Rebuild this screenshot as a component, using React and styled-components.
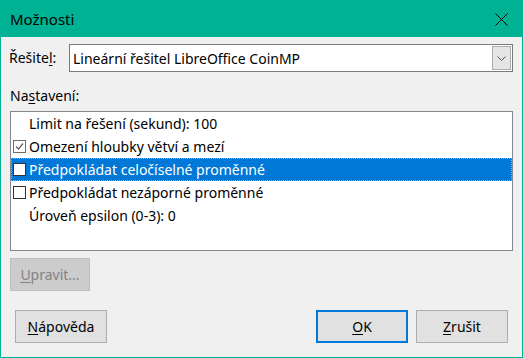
import React from "react";
import styled, { createGlobalStyle } from "styled-components";

const GlobalStyle = createGlobalStyle`
  html, body {
    margin: 0;
    padding: 0;
    background: #f0f0f0;
  }
  body {
    font-family: "Noto Sans", "Open Sans", sans-serif;
    font-size: 14px;
    color: #000;
  }
`;

const Window = styled.div`
  width: 523px;
  height: 358px;
  box-sizing: border-box;
  border: 1px solid #00b294;
  background: #f0f0f0;
  display: flex;
  flex-direction: column;
`;

const TitleBar = styled.div`
  height: 36px;
  background: #00b294;
  display: flex;
  align-items: center;
  justify-content: space-between;
  padding: 0 14px 0 9px;
  font-size: 15px;
`;

const Content = styled.div`
  flex: 1;
  display: flex;
  flex-direction: column;
  padding: 7px 9px 0 8px;
`;

const SolverRow = styled.div`
  display: flex;
  align-items: center;
`;

const Label = styled.span`
  line-height: 20px;
  white-space: nowrap;
`;

const SolverLabel = styled(Label)`
  width: 60px;
`;

const Key = styled.span`
  text-decoration: underline;
  text-underline-offset: 2px;
`;

const Combo = styled.div`
  flex: 1;
  height: 28px;
  box-sizing: border-box;
  border: 1px solid #7a7a7a;
  background: #fff;
  display: flex;
  align-items: stretch;
`;

const ComboText = styled.div`
  flex: 1;
  display: flex;
  align-items: center;
  padding-left: 3px;
`;

const ComboButton = styled.div`
  width: 19px;
  margin: 1px;
  box-sizing: border-box;
  border: 1px solid #adadad;
  background: #e5e5e5;
  display: flex;
  align-items: center;
  justify-content: center;
`;

const SectionLabel = styled(Label)`
  display: block;
  margin: 14px 0 5px 1px;
`;

const ListBox = styled.div`
  height: 140px;
  margin-left: 1px;
  box-sizing: border-box;
  border: 1px solid #828790;
  background: #fff;
`;

const Row = styled.div`
  height: 23px;
  box-sizing: border-box;
  display: flex;
  align-items: center;
  gap: 3px;
  padding-left: ${(p) => (p.$indent ? "17px" : "1px")};
  background: ${(p) => (p.$selected ? "#0078d7" : "transparent")};
  color: ${(p) => (p.$selected ? "#fff" : "#000")};
  border: 1px dotted ${(p) => (p.$selected ? "#f39a2b" : "transparent")};
  white-space: nowrap;
`;

const Box = styled.span`
  width: 13px;
  height: 13px;
  box-sizing: border-box;
  border: 1px solid ${(p) => (p.$checked ? "#6d6d6d" : "#333")};
  background: #fff;
  display: flex;
  align-items: center;
  justify-content: center;
  flex-shrink: 0;
`;

const Button = styled.button`
  width: ${(p) => p.$width || 92}px;
  height: 33px;
  box-sizing: border-box;
  font-family: inherit;
  font-size: 14px;
  padding: 0;
  color: ${(p) => (p.disabled ? "#838383" : "#000")};
  background: ${(p) => (p.disabled ? "#cccccc" : "#e1e1e1")};
  border: ${(p) =>
    p.$default ? "2px solid #0078d7" : `1px solid ${p.disabled ? "#bfbfbf" : "#adadad"}`};
`;

const EditRow = styled.div`
  margin-top: 7px;
  padding-left: 1px;
`;

const Footer = styled.div`
  display: flex;
  align-items: center;
  padding: 0 14px 14px 14px;
  margin-top: auto;
  gap: 8px;
`;

const Spacer = styled.div`
  flex: 1;
`;

const CloseIcon = () => (
  <svg width="13" height="13" viewBox="0 0 13 13">
    <path d="M0.5 0.5 L12.5 12.5 M12.5 0.5 L0.5 12.5" stroke="#000" strokeWidth="1" />
  </svg>
);

const Chevron = () => (
  <svg width="9" height="5" viewBox="0 0 9 5">
    <path d="M0.5 0.5 L4.5 4.5 L8.5 0.5" stroke="#555" strokeWidth="1" fill="none" />
  </svg>
);

const Check = () => (
  <svg width="11" height="11" viewBox="0 0 11 11">
    <path d="M2 5.5 L4.5 8 L9 2.5" stroke="#5f5f5f" strokeWidth="1.2" fill="none" />
  </svg>
);

const options = [
  { text: "Limit na řešení (sekund): 100" },
  { text: "Omezení hloubky větví a mezí", box: true, checked: true },
  { text: "Předpokládat celočíselné proměnné", box: true, selected: true },
  { text: "Předpokládat nezáporné proměnné", box: true },
  { text: "Úroveň epsilon (0-3): 0" },
];

export default function App() {
  return (
    <>
      <GlobalStyle />
      <Window>
        <TitleBar>
          <span>Možnosti</span>
          <CloseIcon />
        </TitleBar>
        <Content>
          <SolverRow>
            <SolverLabel>
              Řešite<Key>l</Key>:
            </SolverLabel>
            <Combo>
              <ComboText>Lineární řešitel LibreOffice CoinMP</ComboText>
              <ComboButton>
                <Chevron />
              </ComboButton>
            </Combo>
          </SolverRow>
          <SectionLabel>
            Na<Key>s</Key>tavení:
          </SectionLabel>
          <ListBox>
            {options.map((o, i) => (
              <Row key={i} $indent={!o.box} $selected={o.selected}>
                {o.box && <Box $checked={o.checked}>{o.checked && <Check />}</Box>}
                {o.text}
              </Row>
            ))}
          </ListBox>
          <EditRow>
            <Button disabled $width={80}>
              <Key>U</Key>pravit...
            </Button>
          </EditRow>
        </Content>
        <Footer>
          <Button>
            <Key>N</Key>ápověda
          </Button>
          <Spacer />
          <Button $default>
            <Key>O</Key>K
          </Button>
          <Button>
            <Key>Z</Key>rušit
          </Button>
        </Footer>
      </Window>
    </>
  );
}
